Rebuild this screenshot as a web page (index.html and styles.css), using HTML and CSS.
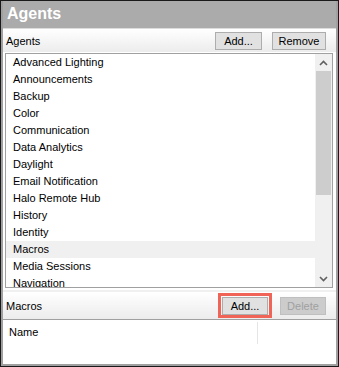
FILE: index.html
```html
<!DOCTYPE html>
<html lang="en">
<head>
  <meta charset="UTF-8" />
  <title>Agents</title>
  <link rel="stylesheet" href="styles.css">
</head>
<body>
  <div class="frame">
    <div class="title">Agents</div>
    <div class="toolbar">
      <span class="label">Agents</span>
      <button class="btn add">Add...</button>
      <button class="btn remove">Remove</button>
    </div>
    <div class="listbox">
      <ul class="items">
        <li>Advanced Lighting</li>
        <li>Announcements</li>
        <li>Backup</li>
        <li>Color</li>
        <li>Communication</li>
        <li>Data Analytics</li>
        <li>Daylight</li>
        <li>Email Notification</li>
        <li>Halo Remote Hub</li>
        <li>History</li>
        <li>Identity</li>
        <li class="selected">Macros</li>
        <li>Media Sessions</li>
        <li>Navigation</li>
      </ul>
      <div class="scrollbar">
        <div class="arrow">
          <svg width="9" height="6" viewBox="0 0 9 6"><path d="M1 5 L4.5 1.5 L8 5" fill="none" stroke="#606060" stroke-width="1.6"/></svg>
        </div>
        <div class="track"><div class="thumb"></div></div>
        <div class="arrow">
          <svg width="9" height="6" viewBox="0 0 9 6"><path d="M1 1 L4.5 4.5 L8 1" fill="none" stroke="#606060" stroke-width="1.6"/></svg>
        </div>
      </div>
    </div>
    <div class="toolbar second">
      <span class="label">Macros</span>
      <span class="highlight"><button class="btn add">Add...</button></span>
      <button class="btn delete" disabled>Delete</button>
    </div>
    <div class="details">
      <div class="columns">
        <span class="col name">Name</span>
        <span class="col rest"></span>
      </div>
    </div>
  </div>
</body>
</html>
```

FILE: styles.css
```css
body {
  margin: 0;
  background: #fff;
  font-family: 'Liberation Sans', Arial, sans-serif;
  font-size: 11px;
  color: #000;
}
.frame {
  width: 339px;
  height: 367px;
  box-sizing: border-box;
  border: 1px solid #1a1a1a;
  background: #a0a0a0;
  padding: 0 2px 2px 2px;
  display: flex;
  flex-direction: column;
}
.title {
  height: 27px;
  line-height: 26px;
  background: #ababab;
  color: #fff;
  font-weight: bold;
  font-size: 16px;
  padding-left: 4px;
}
.toolbar {
  height: 23px;
  background: linear-gradient(#ffffff, #ececec);
  display: flex;
  align-items: center;
  padding: 0 10px 0 3px;
  border-top: 1px solid #dcdcdc;
}
.toolbar .label {
  flex: 1;
}
.btn {
  font-family: 'Liberation Sans', Arial, sans-serif;
  font-size: 11px;
  color: #000;
  background: #e1e1e1;
  border: 1px solid #adadad;
  height: 18px;
  padding: 0;
  margin: 0;
}
.toolbar .add {
  width: 47px;
}
.toolbar .remove {
  width: 54px;
  margin-left: 10px;
}
.listbox {
  background: #fff;
  padding: 1px 3px 2px 2px;
  display: flex;
  height: 238px;
  box-sizing: border-box;
}
.items {
  list-style: none;
  margin: 0;
  padding: 0;
  flex: 1;
  border: 1px solid #a0a0a0;
  border-right: none;
  overflow: hidden;
}
.items li {
  height: 17px;
  line-height: 17px;
  padding-left: 7px;
  white-space: nowrap;
}
.items li.selected {
  background: #f0f0f0;
}
.scrollbar {
  width: 17px;
  background: #f0f0f0;
  border: 1px solid #a0a0a0;
  border-left: none;
  display: flex;
  flex-direction: column;
}
.arrow {
  height: 17px;
  display: flex;
  align-items: center;
  justify-content: center;
}
.track {
  flex: 1;
}
.thumb {
  margin: 0 1px;
  height: 124px;
  background: #cdcdcd;
}
.second {
  height: 27px;
  border-top: 2px solid #f0f0f0;
  padding-right: 10px;
}
.highlight {
  border: 3px solid #ef6457;
  padding: 0 1px;
  display: flex;
  height: 19px;
  align-items: center;
}
.second .add {
  width: 46px;
}
.delete {
  width: 46px;
  margin-left: 8px;
  color: #a0a0a0;
  background: #cccccc;
  border-color: #bfbfbf;
}
.details {
  flex: 1;
  background: #fff;
  border-top: 1px solid #a0a0a0;
  padding-top: 2px;
}
.columns {
  display: flex;
  height: 22px;
  align-items: center;
}
.col.name {
  width: 248px;
  padding-left: 6px;
  height: 22px;
  line-height: 20px;
  border-right: 1px solid #e5e5e5;
}
```
